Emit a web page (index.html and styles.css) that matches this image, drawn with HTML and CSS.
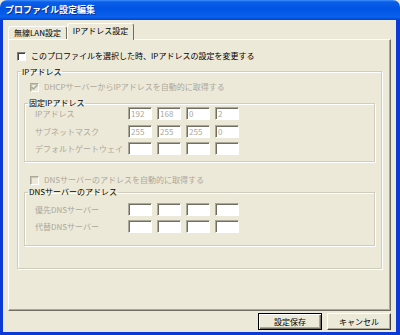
FILE: index.html
```html
<!DOCTYPE html>
<html lang="ja">
<head>
    <meta charset="UTF-8">
    <title>プロファイル設定編集</title>
    <link rel="stylesheet" href="styles.css">
</head>
<body>
    <div class="window">
        <div class="titlebar">プロファイル設定編集</div>
        <div class="client">
            <div class="tabs">
                <div class="tab">無線LAN設定</div>
                <div class="tab active">IPアドレス設定</div>
            </div>

            <div class="panel">
                <div class="check"><span class="box"></span>このプロファイルを選択した時、IPアドレスの設定を変更する</div>

                <fieldset class="group outer">
                    <legend class="gray">IPアドレス</legend>
                    <div class="check sub disabled">
                        <span class="box off"><svg width="9" height="9" viewBox="0 0 9 9"><path d="M1.5 4 L3.5 6 L7.5 2" fill="none" stroke="#aca899" stroke-width="1.5"/></svg></span>DHCPサーバーからIPアドレスを自動的に取得する
                    </div>

                    <fieldset class="group inner">
                        <legend>固定IPアドレス</legend>
                        <div class="rows first">
                            <div class="row">
                                <span class="label">IPアドレス</span>
                                <span class="field">192</span><span class="field">168</span><span class="field">0</span><span class="field">2</span>
                            </div>
                            <div class="row">
                                <span class="label">サブネットマスク</span>
                                <span class="field">255</span><span class="field">255</span><span class="field">255</span><span class="field">0</span>
                            </div>
                            <div class="row">
                                <span class="label">デフォルトゲートウェイ</span>
                                <span class="field"></span><span class="field"></span><span class="field"></span><span class="field"></span>
                            </div>
                        </div>
                    </fieldset>

                    <div class="check sub disabled dns-check"><span class="box off"></span>DNSサーバーのアドレスを自動的に取得する</div>

                    <fieldset class="group inner dns">
                        <legend>DNSサーバーのアドレス</legend>
                        <div class="rows">
                            <div class="row">
                                <span class="label">優先DNSサーバー</span>
                                <span class="field"></span><span class="field"></span><span class="field"></span><span class="field"></span>
                            </div>
                            <div class="row">
                                <span class="label">代替DNSサーバー</span>
                                <span class="field"></span><span class="field"></span><span class="field"></span><span class="field"></span>
                            </div>
                        </div>
                    </fieldset>
                </fieldset>
            </div>

            <div class="buttons">
                <div class="btn default">設定保存</div>
                <div class="btn">キャンセル</div>
            </div>
        </div>
    </div>
</body>
</html>
```

FILE: styles.css
```css
* {
    box-sizing: border-box;
}
body {
    margin: 0;
    background: #ece9d8;
    font-family: "Noto Sans CJK JP", "Liberation Sans", sans-serif;
    font-size: 8px;
    color: #000;
}
.window {
    width: 400px;
    height: 335px;
    display: flex;
    flex-direction: column;
}
.titlebar {
    height: 20px;
    padding-left: 5px;
    border-radius: 7px 7px 0 0;
    background: linear-gradient(to bottom, #3f8ffb 0, #0a5ee8 2px, #0054e3 45%, #0a62ee 85%, #0043cc 100%);
    color: #fff;
    font-size: 9px;
    font-weight: bold;
    line-height: 20px;
    text-shadow: 1px 1px 0 #0a2a90;
}
.client {
    flex: 1;
    display: flex;
    flex-direction: column;
    padding: 3px 5px 0 5px;
    background: #ece9d8;
    border: solid #0b3ad6;
    border-width: 0 4px 3px 3px;
}

/* tabs */
.tabs {
    display: flex;
    align-items: flex-end;
    height: 16px;
    position: relative;
    z-index: 1;
}
.tab {
    width: 59px;
    height: 13px;
    border: 1px solid;
    border-color: #fff #716f64 transparent #fff;
    border-bottom: none;
    border-radius: 3px 3px 0 0;
    text-align: center;
    line-height: 12px;
}
.tab.active {
    width: 67px;
    height: 17px;
    margin-bottom: -1px;
    background: #ece9d8;
    line-height: 14px;
}

/* panel */
.panel {
    height: 272px;
    padding: 10px 8px 0 8px;
    border: 1px solid;
    border-color: #fff #716f64 #716f64 #fff;
    box-shadow: inset -1px -1px 0 #aca899;
}
.check {
    display: flex;
    align-items: center;
    gap: 5px;
    height: 12px;
    line-height: 12px;
}
.box {
    width: 9px;
    height: 9px;
    flex: none;
    background: #fff;
    border: 1px solid;
    border-color: #808080 #fff #fff #808080;
    box-shadow: inset 1px 1px 0 #404040;
}
.box.off {
    background: #ece9d8;
    border-color: #aca899 #fff #fff #aca899;
    box-shadow: inset 1px 1px 0 #c9c5b5;
}
.box svg {
    display: block;
    margin: -1px 0 0 -1px;
}
.disabled {
    color: #aca899;
}
.check.sub {
    margin-left: 6px;
}

/* group frames */
.group {
    margin: 0;
    padding: 0;
    min-width: 0;
    border: 1px solid #d0cdbf;
    box-shadow: inset 1px 1px 0 #fff, 1px 1px 0 #fff;
}
.group legend {
    padding: 0 1px;
    line-height: 8px;
}
.outer {
    margin-top: 4px;
    padding: 0 6px 22px 6px;
}
.outer > legend {
    margin-left: -3px;
    line-height: 11px;
}
.outer > .check.sub:first-of-type {
    margin-top: 4px;
}
.inner {
    margin-top: 6px;
    padding: 0 0 6px 10px;
}
.inner > legend {
    margin-left: -7px;
}
.dns-check {
    margin-top: 12px;
}
.inner.dns {
    margin-top: 2px;
    padding-bottom: 12px;
}
.rows {
    display: flex;
    flex-direction: column;
    gap: 4.5px;
}
.rows.first {
    margin-top: 0;
}
.dns .rows {
    margin-top: 7px;
    gap: 4px;
}
.row {
    display: flex;
    align-items: center;
    gap: 5px;
    height: 13px;
}
.label {
    width: 88px;
    color: #aca899;
}
.field {
    width: 24px;
    height: 13px;
    padding-left: 2px;
    background: #fff;
    border: 1px solid;
    border-color: #aca899 #fff #fff #aca899;
    box-shadow: inset 1px 1px 0 #716f64;
    color: #aca899;
    line-height: 11px;
}

/* buttons */
.buttons {
    display: flex;
    justify-content: flex-end;
    gap: 5px;
    margin-top: 2px;
}
.btn {
    width: 64px;
    height: 17px;
    border: 1px solid;
    border-color: #fff #404040 #404040 #fff;
    box-shadow: inset -1px -1px 0 #aca899;
    text-align: center;
    line-height: 15px;
}
.btn.default {
    border-color: #000;
    box-shadow: inset 1px 1px 0 #fff, inset -1px -1px 0 #716f64, inset -2px -2px 0 #aca899;
}
```
